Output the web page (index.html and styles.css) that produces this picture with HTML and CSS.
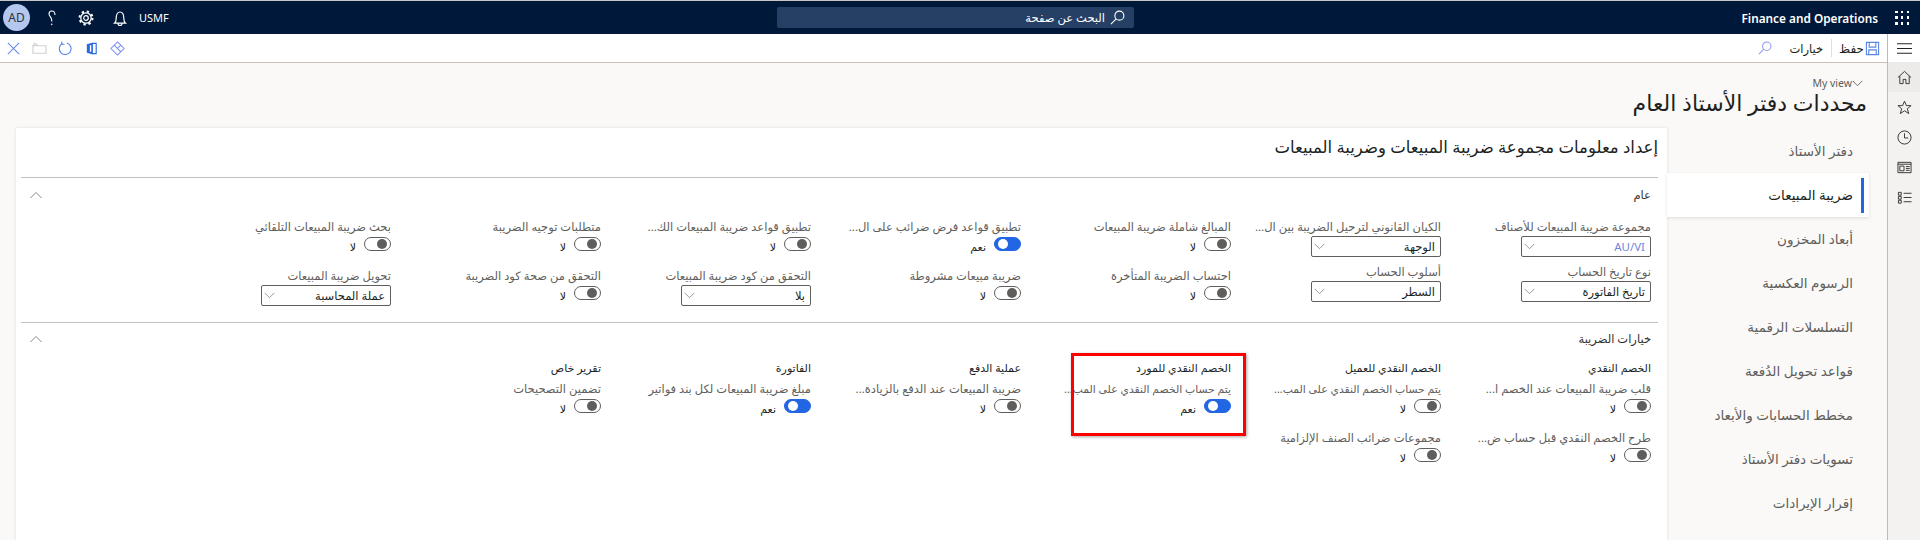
FILE: index.html
```html
<!DOCTYPE html>
<html lang="ar" dir="rtl">
<head>
<meta charset="UTF-8">
<meta name="viewport" content="width=device-width, initial-scale=1.0">
<title>محددات دفتر الأستاذ العام</title>
<link rel="stylesheet" href="styles.css">
</head>
<body>

<svg class="sprite" aria-hidden="true">
    <symbol id="chevron" viewBox="0 0 12 8"><path d="M.5 1 6 6.500 11.500 1" fill="none" stroke="currentColor"/></symbol>
    <symbol id="search" viewBox="0 0 16 16"><circle cx="10" cy="6" r="4.800" fill="none" stroke="currentColor" stroke-width="1.200"/><path d="M6.600 9.400 1 15" stroke="currentColor" stroke-width="1.200"/></symbol>
</svg>

<header class="topbar">
    <div class="topbar-right">
        <span class="waffle">
            <i></i><i></i><i></i><i></i><i></i><i></i><i></i><i></i><i></i>
        </span>
        <span class="product">Finance and Operations</span>
    </div>
    <div class="searchbox">
        <svg class="searchbox-icon"><use href="#search"/></svg>
        <span>البحث عن صفحة</span>
    </div>
    <div class="topbar-left">
        <span class="company">USMF</span>
        <svg class="top-icon" viewBox="0 0 16 16"><path d="M13.500 13.200H2.500c1.400-1.200 1.700-2.600 1.700-5C4.200 4.500 5.700 2 8 2s3.800 2.500 3.800 6.200c0 2.400.3 3.800 1.700 5zM6 13.500c0 1.300 1 2 2 2s2-.7 2-2" fill="none" stroke="#fff" stroke-width="1.200"/></svg>
        <svg class="top-icon" viewBox="0 0 16 16"><circle cx="8" cy="8" r="2.300" fill="none" stroke="#fff" stroke-width="1.200"/><circle cx="8" cy="8" r="5.200" fill="none" stroke="#fff" stroke-width="1.300"/><circle cx="8" cy="8" r="6.500" fill="none" stroke="#fff" stroke-width="2" stroke-dasharray="2.300 2.800"/></svg>
        <svg class="top-icon" viewBox="0 0 16 16"><path d="M11 5C11 2.800 9.800 1 7.800 1 6.100 1 5 2.300 5 4c0 2.200 2.700 3.200 2.700 6v1.500" fill="none" stroke="#fff" stroke-width="1.100"/><circle cx="7.700" cy="14.300" r=".9" fill="#f4c6c6"/></svg>
        <span class="avatar">AD</span>
    </div>
</header>

<div class="layout">
    <aside class="rail">
        <div class="rail-item rail-item-menu">
            <svg class="rail-icon" viewBox="0 0 16 16"><path d="M0 3h16M0 8h16M0 13h16" stroke="#252423" stroke-width="1.100"/></svg>
        </div>
        <div class="rail-item rail-item-active">
            <svg class="rail-icon" viewBox="0 0 16 16"><path d="M1 8 8 1.500 15 8M3 6.500V14.500h3.500V10h3v4.500H13V6.500" fill="none" stroke="#323130"/></svg>
        </div>
        <div class="rail-item">
            <svg class="rail-icon" viewBox="0 0 16 16"><path d="M8 1.200 10 6h5l-4 3.300 1.500 5.200L8 11.500l-4.500 3L5 9.300 1 6h5z" fill="none" stroke="#323130"/></svg>
        </div>
        <div class="rail-item">
            <svg class="rail-icon" viewBox="0 0 16 16"><circle cx="8" cy="8" r="7" fill="none" stroke="#323130"/><path d="M8 3.500V8.500H12" fill="none" stroke="#323130"/></svg>
        </div>
        <div class="rail-item">
            <svg class="rail-icon" viewBox="0 0 16 16"><path d="M1 2.500h14v11H1zM1 4.500h14M3 6.500h4.500v5H3zM9.500 7h4M9.500 9h4M9.500 11h4" fill="none" stroke="#323130"/></svg>
        </div>
        <div class="rail-item">
            <svg class="rail-icon" viewBox="0 0 16 16"><path d="M1.500 2.500h3v3h-3zM1.500 6.800h3v3h-3zM1.500 11h3v3h-3zM7 3.500h8.500M7 8h8.500M7 12.500h8.500" fill="none" stroke="#323130"/></svg>
        </div>
    </aside>

    <div class="workspace">
        <div class="toolbar">
            <div class="toolbar-actions">
                <svg class="tool-icon" viewBox="0 0 16 16"><path d="M1.500 1.500h13v13h-13z M4.500 1.500v5h7v-5 M4 14.500v-5h8v5" fill="none" stroke="#5b86e8" stroke-width="1.200"/></svg>
                <span class="tool-label">حفظ</span>
                <span class="tool-sep"></span>
                <span class="tool-label tool-label-options">خيارات</span>
                <svg class="tool-icon tool-search"><use href="#search"/></svg>
            </div>
            <div class="toolbar-extra">
                <svg class="tool-icon" viewBox="0 0 16 16"><path d="M8 1 15 8 8 15 1 8zM4.500 4.500 11.500 11.500M11.500 4.500 8 8" fill="none" stroke="#7a8cf0" stroke-width="1.100"/></svg>
                <svg class="tool-icon" viewBox="0 0 16 16"><path d="M9.500 1.500 3 3.500v9l6.500 2z" fill="#2a6ae0"/><path d="M9.500 2.500H13v11H9.500" fill="none" stroke="#2a6ae0" stroke-width="1.200"/><path d="M7 4.500v7" stroke="#fff" stroke-width="1.500"/></svg>
                <svg class="tool-icon" viewBox="0 0 16 16"><path d="M9.500 2.100a6.300 6.300 0 1 1-5 .6" fill="none" stroke="#5b86e8" stroke-width="1.200"/><path d="M4 .5v3h3" fill="none" stroke="#5b86e8" stroke-width="1.200"/></svg>
                <svg class="tool-icon" viewBox="0 0 16 16"><path d="M1 5h14v8H1zM1 5 3 2.500 6 4.500" fill="none" stroke="#d2d0ce" stroke-width="1.200"/></svg>
                <svg class="tool-icon" viewBox="0 0 16 16"><path d="M2 2 14 14M14 2 2 14" fill="none" stroke="#6a8bea" stroke-width="1.200"/></svg>
            </div>
        </div>

        <main class="page">
            <div class="page-head">
                <div class="view-picker">
                    <span>My view</span>
                    <svg class="view-chevron"><use href="#chevron"/></svg>
                </div>
                <h1 class="page-title">محددات دفتر الأستاذ العام</h1>
            </div>

            <div class="page-body">
                <nav class="tabs">
                    <a class="tab">دفتر الأستاذ</a>
                    <a class="tab tab-active">ضريبة المبيعات</a>
                    <a class="tab">أبعاد المخزون</a>
                    <a class="tab">الرسوم العكسية</a>
                    <a class="tab">التسلسلات الرقمية</a>
                    <a class="tab">قواعد تحويل الدُفعة</a>
                    <a class="tab">مخطط الحسابات والأبعاد</a>
                    <a class="tab">تسويات دفتر الأستاذ</a>
                    <a class="tab">إقرار الإيرادات</a>
                </nav>

                <section class="card">
                    <h2 class="card-title">إعداد معلومات مجموعة ضريبة المبيعات وضريبة المبيعات</h2>

                    <div class="group group-general">
                        <div class="group-head">
                            <span>عام</span>
                            <svg class="group-chevron"><use href="#chevron"/></svg>
                        </div>
                        <div class="columns">
                            <div class="col">
                                <div class="field">
                                    <div class="label">مجموعة ضريبة المبيعات للأصناف</div>
                                    <div class="combo combo-link"><span>AU/VI</span><svg class="combo-chevron"><use href="#chevron"/></svg></div>
                                </div>
                                <div class="field">
                                    <div class="label">نوع تاريخ الحساب</div>
                                    <div class="combo"><span>تاريخ الفاتورة</span><svg class="combo-chevron"><use href="#chevron"/></svg></div>
                                </div>
                            </div>
                            <div class="col">
                                <div class="field">
                                    <div class="label">الكيان القانوني لترحيل الضريبة بين ال...</div>
                                    <div class="combo"><span>الوجهة</span><svg class="combo-chevron"><use href="#chevron"/></svg></div>
                                </div>
                                <div class="field">
                                    <div class="label">أسلوب الحساب</div>
                                    <div class="combo"><span>السطر</span><svg class="combo-chevron"><use href="#chevron"/></svg></div>
                                </div>
                            </div>
                            <div class="col">
                                <div class="field field-toggle">
                                    <div class="label">المبالغ شاملة ضريبة المبيعات</div>
                                    <div class="switch-row"><span class="switch"></span><span class="switch-text">لا</span></div>
                                </div>
                                <div class="field field-toggle">
                                    <div class="label">احتساب الضريبة المتأخرة</div>
                                    <div class="switch-row"><span class="switch"></span><span class="switch-text">لا</span></div>
                                </div>
                            </div>
                            <div class="col">
                                <div class="field field-toggle">
                                    <div class="label">تطبيق قواعد فرض ضرائب على ال...</div>
                                    <div class="switch-row"><span class="switch switch-on"></span><span class="switch-text">نعم</span></div>
                                </div>
                                <div class="field field-toggle">
                                    <div class="label">ضريبة مبيعات مشروطة</div>
                                    <div class="switch-row"><span class="switch"></span><span class="switch-text">لا</span></div>
                                </div>
                            </div>
                            <div class="col">
                                <div class="field field-toggle">
                                    <div class="label">تطبيق قواعد ضريبة المبيعات الك...</div>
                                    <div class="switch-row"><span class="switch"></span><span class="switch-text">لا</span></div>
                                </div>
                                <div class="field">
                                    <div class="label">التحقق من كود ضريبة المبيعات</div>
                                    <div class="combo"><span>بلا</span><svg class="combo-chevron"><use href="#chevron"/></svg></div>
                                </div>
                            </div>
                            <div class="col">
                                <div class="field field-toggle">
                                    <div class="label">متطلبات توجيه الضريبة</div>
                                    <div class="switch-row"><span class="switch"></span><span class="switch-text">لا</span></div>
                                </div>
                                <div class="field field-toggle">
                                    <div class="label">التحقق من صحة كود الضريبة</div>
                                    <div class="switch-row"><span class="switch"></span><span class="switch-text">لا</span></div>
                                </div>
                            </div>
                            <div class="col">
                                <div class="field field-toggle">
                                    <div class="label">بحث ضريبة المبيعات التلقائي</div>
                                    <div class="switch-row"><span class="switch"></span><span class="switch-text">لا</span></div>
                                </div>
                                <div class="field">
                                    <div class="label">تحويل ضريبة المبيعات</div>
                                    <div class="combo"><span>عملة المحاسبة</span><svg class="combo-chevron"><use href="#chevron"/></svg></div>
                                </div>
                            </div>
                        </div>
                    </div>

                    <div class="group group-options">
                        <div class="group-head">
                            <span>خيارات الضريبة</span>
                            <svg class="group-chevron"><use href="#chevron"/></svg>
                        </div>
                        <div class="columns">
                            <div class="col">
                                <div class="col-title">الخصم النقدي</div>
                                <div class="field field-toggle">
                                    <div class="label">قلب ضريبة المبيعات عند الخصم ا...</div>
                                    <div class="switch-row"><span class="switch"></span><span class="switch-text">لا</span></div>
                                </div>
                                <div class="field field-toggle">
                                    <div class="label">طرح الخصم النقدي قبل حساب ض...</div>
                                    <div class="switch-row"><span class="switch"></span><span class="switch-text">لا</span></div>
                                </div>
                            </div>
                            <div class="col">
                                <div class="col-title">الخصم النقدي للعميل</div>
                                <div class="field field-toggle">
                                    <div class="label label-tight">يتم حساب الخصم النقدي على المب...</div>
                                    <div class="switch-row"><span class="switch"></span><span class="switch-text">لا</span></div>
                                </div>
                                <div class="field field-toggle">
                                    <div class="label">مجموعات ضرائب الصنف الإلزامية</div>
                                    <div class="switch-row"><span class="switch"></span><span class="switch-text">لا</span></div>
                                </div>
                            </div>
                            <div class="col col-marked">
                                <div class="col-title">الخصم النقدي للمورد</div>
                                <div class="field field-toggle">
                                    <div class="label label-tight">يتم حساب الخصم النقدي على المب...</div>
                                    <div class="switch-row"><span class="switch switch-on"></span><span class="switch-text">نعم</span></div>
                                </div>
                            </div>
                            <div class="col">
                                <div class="col-title">عملية الدفع</div>
                                <div class="field field-toggle">
                                    <div class="label">ضريبة المبيعات عند الدفع بالزيادة...</div>
                                    <div class="switch-row"><span class="switch"></span><span class="switch-text">لا</span></div>
                                </div>
                            </div>
                            <div class="col">
                                <div class="col-title">الفاتورة</div>
                                <div class="field field-toggle">
                                    <div class="label">مبلغ ضريبة المبيعات لكل بند فواتير</div>
                                    <div class="switch-row"><span class="switch switch-on"></span><span class="switch-text">نعم</span></div>
                                </div>
                            </div>
                            <div class="col">
                                <div class="col-title">تقرير خاص</div>
                                <div class="field field-toggle">
                                    <div class="label">تضمين التصحيحات</div>
                                    <div class="switch-row"><span class="switch"></span><span class="switch-text">لا</span></div>
                                </div>
                            </div>
                        </div>
                    </div>
                </section>
            </div>
        </main>
    </div>
</div>

</body>
</html>
```

FILE: styles.css
```css
*, *::after {
    box-sizing: border-box;
}

html, body {
    margin: 0;
    height: 100%;
}

body {
    height: 540px;
    overflow: hidden;
    display: flex;
    flex-direction: column;
    font-family: "Noto Sans", "DejaVu Sans", sans-serif;
    font-size: 11px;
    color: #323130;
    background: #faf9f8;
    border-top: 1px solid #c8c6c4;
}

.sprite {
    display: none;
}

/* top bar */
.topbar {
    flex: none;
    height: 33px;
    display: grid;
    grid-template-columns: 786px 357px 1fr;
    align-items: center;
    background: #00183a;
    color: #fff;
}

.topbar-right {
    display: flex;
    align-items: center;
}

.waffle {
    width: 14px;
    height: 14px;
    margin-right: 11px;
    display: grid;
    grid-template-columns: repeat(3, 2.5px);
    justify-content: space-between;
    align-content: space-between;
}

.waffle i {
    height: 2.5px;
    background: #fff;
}

.product {
    margin-right: 17px;
    font-size: 11.8px;
    font-weight: 600;
    direction: ltr;
}

.searchbox {
    height: 21px;
    display: flex;
    align-items: center;
    padding-right: 9px;
    border-radius: 2px;
    background: #264065;
    font-size: 11.5px;
}

.searchbox-icon {
    width: 15px;
    height: 15px;
    margin-left: 5px;
    color: #fff;
}

.topbar-left {
    height: 100%;
    display: flex;
    align-items: center;
    justify-content: flex-end;
    padding-left: 3px;
}

.company {
    font-size: 11px;
    direction: ltr;
}

.company + .top-icon {
    margin-right: 11px;
}

.top-icon {
    width: 16px;
    height: 16px;
    margin-right: 18px;
}

.avatar {
    width: 27px;
    height: 27px;
    margin-right: 14px;
    border-radius: 50%;
    display: flex;
    align-items: center;
    justify-content: center;
    background: #b4c8ef;
    color: #323130;
    font-size: 12px;
}

/* main layout */
.layout {
    flex: 1;
    min-height: 0;
    display: flex;
}

.workspace {
    flex: 1;
    min-width: 0;
    display: flex;
    flex-direction: column;
}

.rail {
    flex: none;
    width: 33px;
    background: #f3f2f1;
    border-left: 1px solid #bdbbb9;
}

.rail-item {
    height: 30px;
    display: flex;
    align-items: center;
    justify-content: center;
}

.rail-item-menu {
    height: 28px;
    background: #fff;
}

.rail-item-active {
    background: #edebe9;
}

.rail-icon {
    width: 15px;
    height: 15px;
}

/* toolbar */
.toolbar {
    flex: none;
    height: 29px;
    display: flex;
    justify-content: space-between;
    align-items: center;
    background: #fff;
    border-bottom: 1px solid #c8c0ba;
}

.toolbar-actions,
.toolbar-extra {
    display: flex;
    align-items: center;
}

.toolbar-actions {
    padding-right: 7px;
}

.toolbar-extra {
    padding-left: 6px;
    gap: 11px;
}

.tool-icon {
    width: 15px;
    height: 15px;
    flex: none;
}

.tool-label {
    margin-right: 1px;
    font-size: 12px;
    color: #201f1e;
}

.tool-label-options {
    font-size: 11.5px;
}

.tool-sep {
    width: 1px;
    height: 18px;
    margin: 0 7px;
    background: #e1dfdd;
}

.tool-search {
    width: 14px;
    height: 14px;
    margin-right: 17px;
    color: #8f9bf0;
}

/* page header */
.page {
    flex: 1;
    min-height: 0;
    display: flex;
    flex-direction: column;
}

.page-head {
    flex: none;
    height: 65px;
    padding: 13px 20px 0 0;
}

.view-picker {
    height: 14px;
    display: flex;
    align-items: center;
    margin-right: 4px;
    font-size: 10.5px;
    color: #605e5c;
}

.view-picker span {
    order: 2;
    direction: ltr;
}

.view-chevron {
    order: 1;
    width: 11px;
    height: 7px;
    color: #605e5c;
}

.page-title {
    margin: -2px 0 0;
    font-size: 22px;
    line-height: 28px;
    font-weight: 400;
    color: #201f1e;
}

/* tabs and card */
.page-body {
    flex: 1;
    min-height: 0;
    display: flex;
}

.tabs {
    flex: none;
    width: 220px;
    padding: 1px 18px 0 0;
}

.tab {
    position: relative;
    height: 44px;
    display: flex;
    align-items: center;
    padding-right: 16px;
    font-size: 13.5px;
    color: #605e5c;
}

.tab-active {
    background: #fff;
    color: #201f1e;
    box-shadow: 0 1px 3px rgba(0, 0, 0, 0.12);
}

.tab-active::after {
    content: "";
    position: absolute;
    top: 5px;
    bottom: 4px;
    right: 5px;
    width: 3px;
    background: #2266e3;
}

.card {
    flex: 1;
    min-width: 0;
    margin-left: 16px;
    padding: 0 9px 0 5px;
    background: #fff;
    box-shadow: 0 0 3px rgba(0, 0, 0, 0.12);
}

.card-title {
    height: 49px;
    margin: 0;
    padding-top: 8px;
    font-size: 16.5px;
    line-height: 22px;
    font-weight: 400;
    color: #201f1e;
}

.group {
    border-top: 1px solid #c4c2c0;
    padding-right: 7px;
}

.group-general {
    height: 145px;
}

.group-head {
    height: 42px;
    padding-top: 9px;
    display: flex;
    justify-content: space-between;
    align-items: flex-start;
    font-size: 11.5px;
    line-height: 16px;
    color: #323130;
}

.group-options .group-head {
    height: 38px;
    padding-top: 8px;
}

.group-chevron {
    width: 12px;
    height: 8px;
    margin-top: 4px;
    margin-left: 9px;
    color: #8a8886;
    transform: scaleY(-1);
}

.columns {
    display: grid;
    grid-template-columns: repeat(7, 210px);
}

.col {
    position: relative;
}

.col-title {
    height: 21px;
    font-size: 11px;
    line-height: 14px;
    color: #201f1e;
}

.field {
    height: 45px;
}

.field-toggle {
    height: 49px;
}

.label {
    height: 14px;
    margin-bottom: 2px;
    font-size: 11.5px;
    line-height: 14px;
    white-space: nowrap;
    color: #605e5c;
}

.label-tight {
    font-size: 10.8px;
}

.field-toggle .label {
    margin-bottom: 3px;
}

.combo {
    width: 130px;
    height: 21px;
    display: flex;
    justify-content: space-between;
    align-items: center;
    padding: 0 5px 0 2px;
    border: 1px solid #605e5c;
    border-radius: 2px;
    font-size: 11.5px;
    color: #201f1e;
}

.combo-link {
    color: #6f86e0;
}

.combo-chevron {
    width: 11px;
    height: 7px;
    color: #8a8886;
}

.switch-row {
    display: flex;
    align-items: flex-start;
}

.switch {
    position: relative;
    flex: none;
    width: 27px;
    height: 14px;
    border: 1px solid #605e5c;
    border-radius: 7px;
    background: #fff;
}

.switch::after {
    content: "";
    position: absolute;
    top: 1px;
    right: 3px;
    width: 10px;
    height: 10px;
    border-radius: 50%;
    background: #605e5c;
}

.switch-on {
    border-color: #2266e3;
    background: #2266e3;
}

.switch-on::after {
    right: auto;
    left: 3px;
    background: #fff;
}

.switch-text {
    margin-right: 8px;
    margin-top: 2px;
    font-size: 11px;
    line-height: 16px;
    color: #201f1e;
}

/* red marker drawn over the vendor column */
.col-marked::after {
    content: "";
    position: absolute;
    top: -8px;
    right: -15px;
    width: 175px;
    height: 83px;
    border: 3px solid #f00;
    box-shadow: 1px 1px 3px rgba(0, 0, 0, 0.35);
}
```
